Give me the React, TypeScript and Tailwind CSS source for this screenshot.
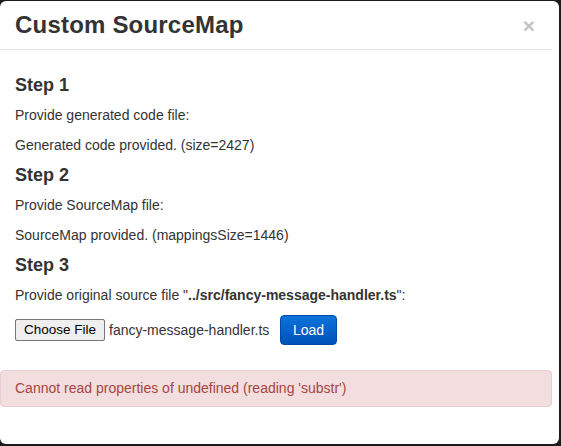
import React from "react";

const font = { fontFamily: '"Liberation Sans", Arial, sans-serif' };

export default function App() {
  return (
    <div className="w-[561px] h-[446px] bg-[#1c1c1c] overflow-hidden" style={font}>
      <div className="mt-px w-[559px] h-[443px] bg-white rounded-[6px] text-[#333]">
        {/* Header */}
        <div className="w-[552px] h-[49px] border-b border-[#e5e5e5] flex items-center justify-between pl-[15px] pr-[17px]">
          <h3 className="text-[24px] font-bold leading-none tracking-[0.2px]">Custom SourceMap</h3>
          <span className="text-[21px] font-bold text-[#c4c4c4] leading-none">×</span>
        </div>
        {/* Body */}
        <div className="w-[552px] pt-[15px]">
          <div className="px-[15px] text-[14px] leading-[20px]">
            <h4 className="mt-[10px] mb-[10px] text-[18px] font-bold leading-[20px]">Step 1</h4>
            <p className="mb-[10px]">Provide generated code file:</p>
            <p className="mb-[10px]">Generated code provided. (size=2427)</p>
            <h4 className="mb-[10px] text-[18px] font-bold leading-[20px]">Step 2</h4>
            <p className="mb-[10px]">Provide SourceMap file:</p>
            <p className="mb-[10px]">SourceMap provided. (mappingsSize=1446)</p>
            <h4 className="mb-[10px] text-[18px] font-bold leading-[20px]">Step 3</h4>
            <p className="mb-[10px]">
              Provide original source file "<b>../src/fancy-message-handler.ts</b>":
            </p>
            <div className="flex items-center h-[30px]">
              <button className="h-[22px] w-[90px] border border-[#767676] bg-[#efefef] rounded-[2px] text-[13.5px] leading-none text-black">
                Choose File
              </button>
              <span className="ml-[4px] text-[14px] text-[#333]">fancy-message-handler.ts</span>
              <button className="ml-[auto] mr-[200px] h-[30px] w-[57px] rounded-[4px] border border-[#0049a6] bg-gradient-to-b from-[#0d73dc] to-[#0052b8] text-white text-[14px]">
                Load
              </button>
            </div>
          </div>
          <div className="mt-[25px] h-[37px] flex items-center px-[14px] bg-[#f2dede] border border-[#ebccd1] rounded-[4px] text-[#a94442] text-[14px]">
            Cannot read properties of undefined (reading 'substr')
          </div>
        </div>
      </div>
    </div>
  );
}
